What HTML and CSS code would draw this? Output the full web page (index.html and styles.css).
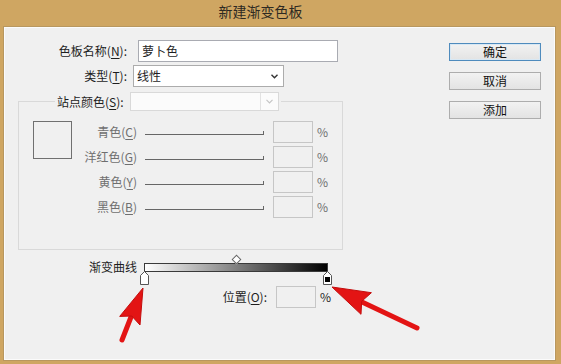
FILE: index.html
```html
<!DOCTYPE html>
<html lang="zh-CN">
<head>
  <meta charset="UTF-8">
  <title>新建渐变色板</title>
  <link rel="stylesheet" href="styles.css">
</head>
<body>
  <div class="window">
    <div class="titlebar">新建渐变色板</div>

    <div class="client">
      <div class="form">
        <div class="row">
          <span class="label">色板名称(<u>N</u>):</span>
          <div class="textbox name">萝卜色</div>
        </div>
        <div class="row row-type">
          <span class="label">类型(<u>T</u>):</span>
          <div class="combo">
            <span>线性</span>
            <svg width="7" height="5" viewBox="0 0 7 5"><path d="M0.5 0.8 L3.5 3.8 L6.5 0.8" fill="none" stroke="#333" stroke-width="1.4"/></svg>
          </div>
        </div>

        <fieldset class="stops">
          <legend>
            <span class="legend-label">站点颜色(<u>S</u>):</span>
            <span class="combo combo-off">
              <span class="combo-btn">
                <svg width="7" height="5" viewBox="0 0 7 5"><path d="M0.5 0.8 L3.5 3.8 L6.5 0.8" fill="none" stroke="#c4c4c4" stroke-width="1.2"/></svg>
              </span>
            </span>
          </legend>
          <div class="stops-body">
            <div class="swatch"></div>
            <div class="channels">
              <div class="channel">
                <span class="ch-label">青色(<u>C</u>)</span>
                <span class="slider"></span>
                <span class="textbox off"></span>
                <span class="pct">%</span>
              </div>
              <div class="channel">
                <span class="ch-label">洋红色(<u>G</u>)</span>
                <span class="slider"></span>
                <span class="textbox off"></span>
                <span class="pct">%</span>
              </div>
              <div class="channel">
                <span class="ch-label">黄色(<u>Y</u>)</span>
                <span class="slider"></span>
                <span class="textbox off"></span>
                <span class="pct">%</span>
              </div>
              <div class="channel">
                <span class="ch-label">黑色(<u>B</u>)</span>
                <span class="slider"></span>
                <span class="textbox off"></span>
                <span class="pct">%</span>
              </div>
            </div>
          </div>
        </fieldset>

        <div class="gradient-row">
          <span class="label grad-label">渐变曲线</span>
          <div class="ramp">
            <div class="midpoint"><span class="diamond"></span></div>
            <div class="bar"></div>
            <div class="ramp-stops">
              <svg width="9" height="14" viewBox="0 0 9 14"><path d="M4.5 0.5 L8.5 4.5 V13.5 H0.5 V4.5 Z" fill="#fff" stroke="#555"/></svg>
              <svg width="9" height="14" viewBox="0 0 9 14"><path d="M4.5 0.5 L8.5 4.5 V13.5 H0.5 V4.5 Z" fill="#fff" stroke="#555"/><rect x="2" y="6" width="5" height="5" fill="#000"/></svg>
            </div>
          </div>
        </div>

        <div class="row pos-row">
          <span class="label pos-label">位置(<u>O</u>):</span>
          <span class="textbox off pos-box"></span>
          <span class="pct pos-pct">%</span>
        </div>
      </div>

      <div class="buttons">
        <button class="btn default">确定</button>
        <button class="btn">取消</button>
        <button class="btn">添加</button>
      </div>
    </div>
  </div>

  <!-- annotation arrows drawn over the dialog -->
  <svg class="arrows" width="561" height="364" viewBox="0 0 561 364">
    <g fill="#e31414" stroke="#c40d0d" stroke-width="1" stroke-linejoin="round">
      <line x1="122" y1="340" x2="131" y2="317" stroke="#e31414" stroke-width="5" stroke-linecap="round"/>
      <polygon points="143,288 140,325 131.8,316 119.7,316.4"/>
      <line x1="417" y1="328" x2="362" y2="302" stroke="#e31414" stroke-width="5" stroke-linecap="round"/>
      <polygon points="332,287 371.4,292.7 361.7,301.3 361,314.3"/>
    </g>
  </svg>
</body>
</html>
```

FILE: styles.css
```css
body {
  margin: 0;
  position: relative;
  font-family: "Noto Sans CJK SC", "Noto Sans", sans-serif;
  font-size: 12px;
  line-height: 16px;
  color: #1e1e1e;
}
.window {
  width: 561px;
  height: 364px;
  background: #cfa662;
  display: flex;
  flex-direction: column;
}
.titlebar {
  height: 26px;
  line-height: 23px;
  text-align: center;
  padding-right: 40px;
  font-size: 14px;
  color: #2e2a22;
}
.client {
  flex: 1;
  margin: 0 5px 3px 3px;
  background: #f0f0f0;
  border: 1px solid #b8975f;
  box-shadow: inset 0 0 0 1px #fbfbfb;
  display: flex;
}
.form {
  padding-top: 13px;
  width: 345px;
}
.row {
  display: flex;
  align-items: center;
}
.row-type {
  margin-top: 3px;
}
.label {
  width: 123px;
  text-align: right;
}
u {
  text-decoration-thickness: 1px;
  text-underline-offset: 2px;
}
.textbox {
  box-sizing: border-box;
  height: 22px;
  border: 1px solid #a9abb2;
  background: #fff;
  padding: 2px 3px;
}
.name {
  width: 200px;
  margin-left: 11px;
}
.combo {
  box-sizing: border-box;
  width: 151px;
  height: 22px;
  margin-left: 6px;
  border: 1px solid #acacac;
  background: #fff;
  padding: 0 5px 0 3px;
  display: flex;
  align-items: center;
  justify-content: space-between;
}

/* group box */
.stops {
  box-sizing: border-box;
  width: 325px;
  margin: 5px 0 0 14px;
  padding: 0;
  border: 1px solid #d9d9d9;
}
.stops legend {
  margin-left: 36px;
  padding: 0 2px;
  display: flex;
  align-items: center;
  height: 19px;
}
.legend-label {
  width: 68px;
}
.combo-off {
  width: 149px;
  height: 19px;
  margin-left: 5px;
  padding: 0;
  border-color: #d9d9d9;
  background: #fbfbfb;
  justify-content: flex-end;
}
.combo-btn {
  width: 17px;
  height: 17px;
  border-left: 1px solid #e2e2e2;
  display: flex;
  align-items: center;
  justify-content: center;
}
.stops-body {
  display: flex;
  align-items: flex-start;
  padding: 10px 0 31px 14px;
}
.swatch {
  box-sizing: border-box;
  width: 39px;
  height: 38px;
  border: 1px solid #707070;
}
.channels {
  display: flex;
  flex-direction: column;
  gap: 3px;
}
.channel {
  display: flex;
  align-items: center;
  height: 22px;
  color: #6f6f6f;
}
.ch-label {
  width: 65px;
  text-align: right;
}
.slider {
  align-self: flex-start;
  margin: 10px 0 0 8px;
  width: 118px;
  height: 3px;
  border-bottom: 1px solid #666;
  border-right: 1px solid #666;
}
.textbox.off {
  width: 40px;
  margin-left: 9px;
  background: #f0f0f0;
  border-color: #c6c6c6;
}
.pct {
  margin-left: 4px;
}

/* gradient ramp */
.gradient-row {
  display: flex;
  align-items: flex-start;
  margin-top: 5px;
}
.grad-label {
  width: 133px;
  margin-top: 4px;
}
.ramp {
  width: 184px;
  margin-left: 7px;
}
.midpoint {
  height: 8px;
  display: flex;
  justify-content: center;
}
.diamond {
  width: 5px;
  height: 5px;
  margin-top: 1px;
  border: 1px solid #666;
  background: #fff;
  transform: rotate(45deg);
}
.bar {
  box-sizing: border-box;
  height: 9px;
  border: 1px solid #3a3a3a;
  background: linear-gradient(to right, #fff, #000);
}
.ramp-stops {
  display: flex;
  justify-content: space-between;
  margin: -1px -4px 0 -4px;
  height: 14px;
}
.ramp-stops svg {
  display: block;
}
.pos-row {
  margin-top: 1px;
}
.pos-label {
  width: 50px;
  margin-left: 213px;
}
.pos-box {
  width: 43px;
  margin-left: 3px;
}
.pos-pct {
  color: #1e1e1e;
}

/* buttons */
.buttons {
  margin-left: auto;
  margin-right: 14px;
  padding-top: 16px;
  display: flex;
  flex-direction: column;
  gap: 11px;
}
.btn {
  width: 92px;
  height: 18px;
  padding: 0;
  font: inherit;
  line-height: 16px;
  color: #111;
  border: 1px solid #adadad;
  background: linear-gradient(#f2f2f2, #e3e3e3);
}
.btn.default {
  border-color: #4f8bbd;
  box-shadow: inset 0 0 0 1px #d8e8f4;
}
.arrows {
  position: absolute;
  left: 0;
  top: 0;
  pointer-events: none;
}
```
